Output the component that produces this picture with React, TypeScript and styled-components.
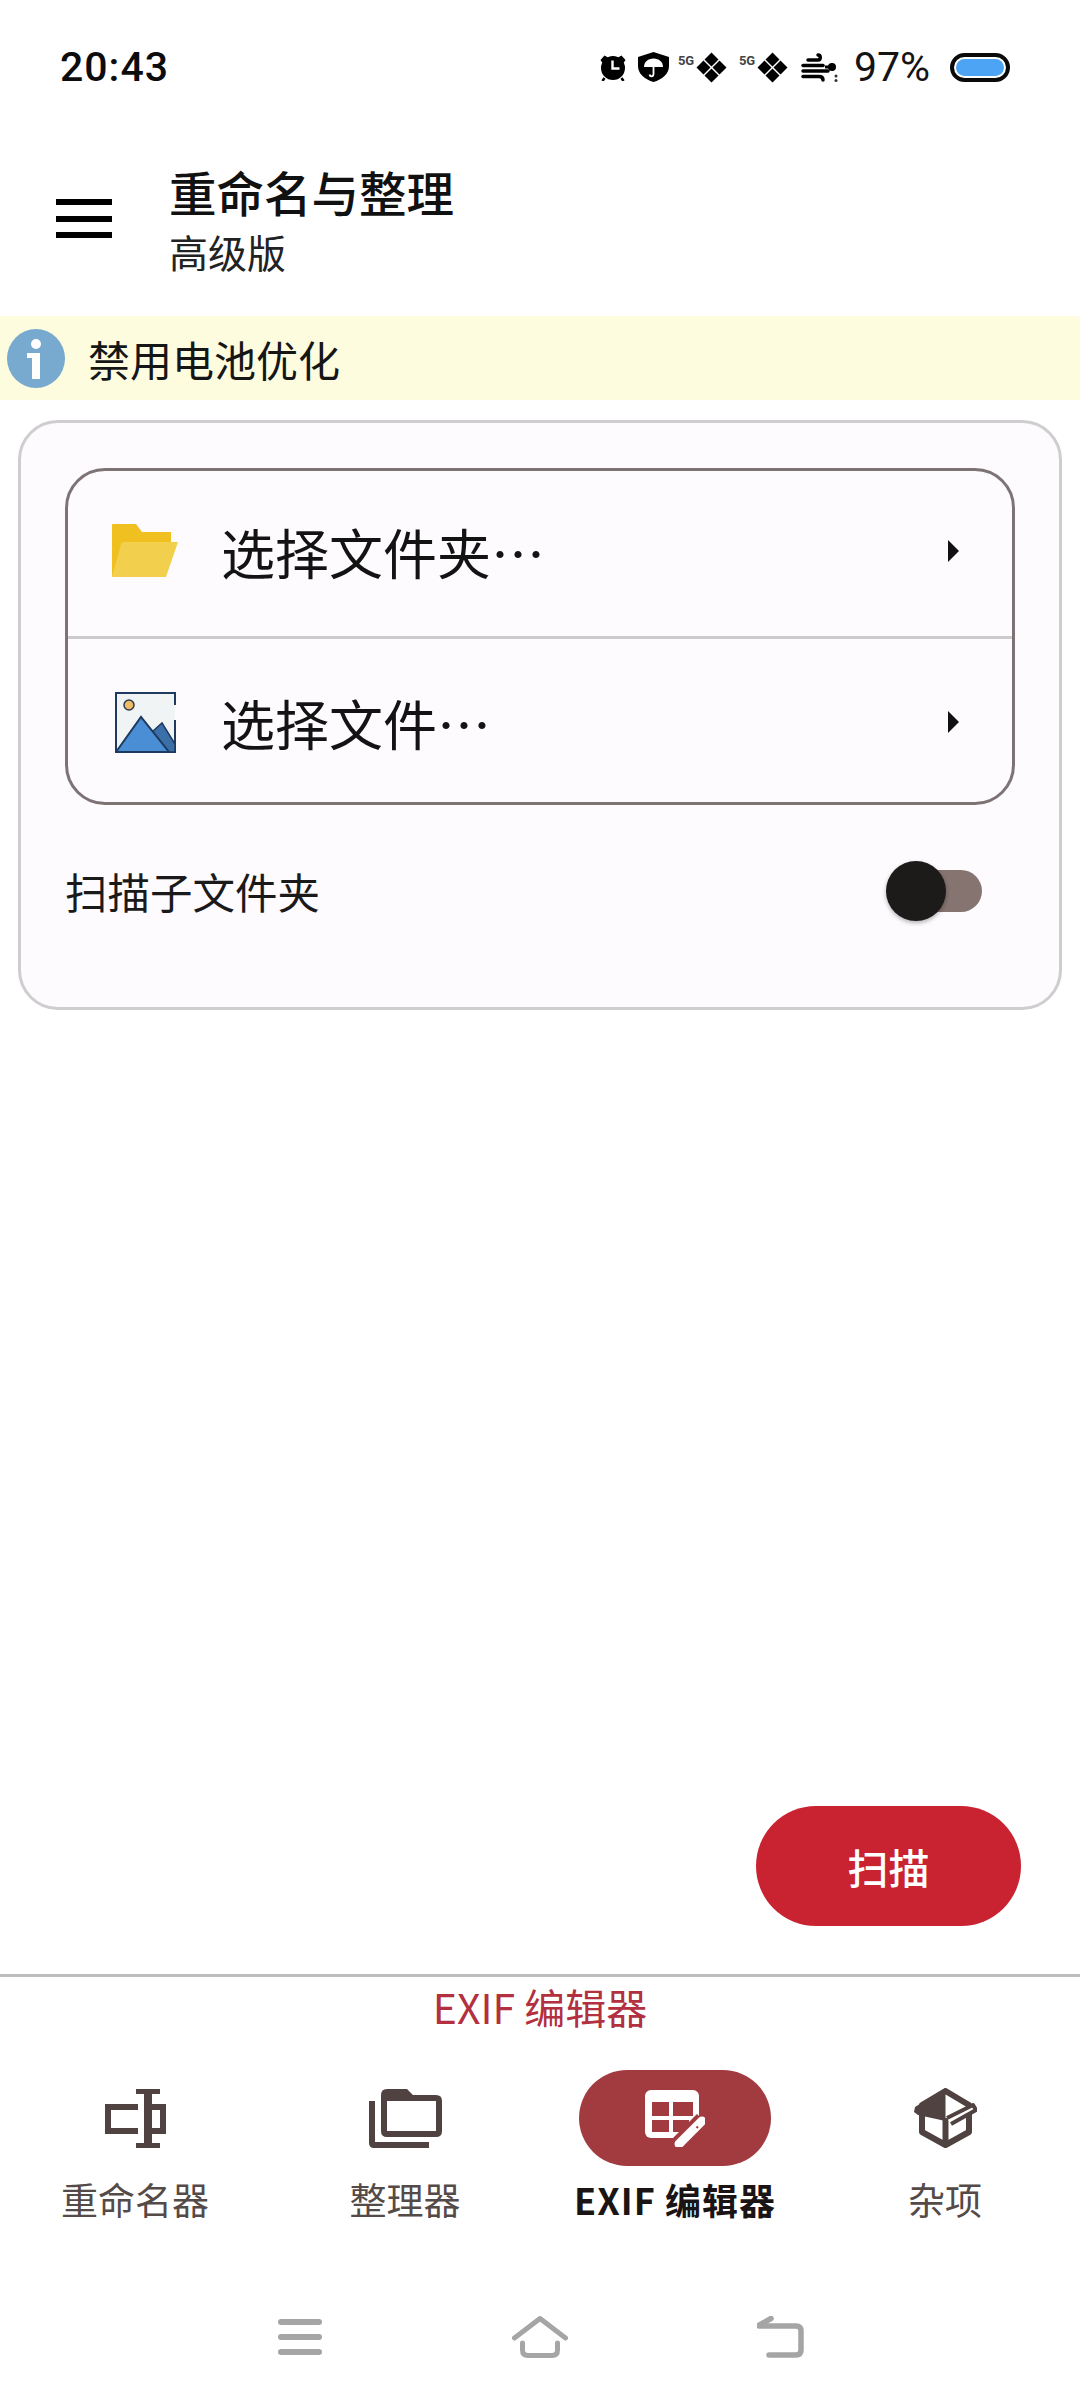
import React from "react";
import styled, { createGlobalStyle } from "styled-components";

const cjk = `"Noto Sans CJK SC", "Noto Sans", sans-serif`;

const GlobalStyle = createGlobalStyle`
  html, body { margin: 0; padding: 0; background: #fff; }
  * { box-sizing: border-box; }
`;

const Screen = styled.div`
  width: 1080px;
  height: 2400px;
  display: flex;
  flex-direction: column;
  background: #fff;
  font-family: ${cjk};
  overflow: hidden;
`;

const StatusBar = styled.div`
  height: 134px;
  flex: none;
  display: flex;
  align-items: center;
  justify-content: space-between;
  padding: 0 70px 0 60px;
`;

const Clock = styled.span`
  font-family: Roboto, sans-serif;
  font-weight: 500;
  font-size: 41px;
  letter-spacing: 1px;
  color: #0c0c0c;
`;

const StatusIcons = styled.div`
  display: flex;
  align-items: center;
`;

const StatusSlot = styled.div<{ $left: number }>`
  display: flex;
  align-items: flex-start;
  margin-left: ${(p) => p.$left}px;
`;

const FiveG = styled.span`
  font-family: Roboto, sans-serif;
  font-size: 13px;
  font-weight: 700;
  line-height: 13px;
  width: 18px;
  margin-top: 2px;
  color: #444;
`;

const Percent = styled.span`
  font-family: Roboto, sans-serif;
  font-size: 41px;
  line-height: 40px;
  color: #141414;
`;

const AppBar = styled.header`
  height: 182px;
  flex: none;
  display: flex;
  align-items: center;
  padding: 0 0 11px 56px;
`;

const Burger = styled.div`
  width: 56px;
  height: 39px;
  margin: 0 57px 2px 0;
  display: flex;
  flex-direction: column;
  justify-content: space-between;
  span {
    display: block;
    height: 6px;
    background: #000;
  }
`;

const TitleBlock = styled.div`
  display: flex;
  flex-direction: column;
`;

const Title = styled.div`
  font-size: 47.5px;
  line-height: 58px;
  margin-bottom: 5px;
  font-weight: 500;
  color: #111;
`;

const Subtitle = styled.div`
  font-size: 39px;
  line-height: 50px;
  color: #222;
`;

const Banner = styled.div`
  height: 84px;
  flex: none;
  display: flex;
  align-items: center;
  padding-left: 7px;
  background: #fefcdf;
`;

const BannerText = styled.span`
  margin-left: 23px;
  font-size: 42px;
  color: #161616;
`;

const Main = styled.main`
  flex: 1;
  display: flex;
  flex-direction: column;
  padding: 20px 18px 48px;
`;

const Card = styled.section`
  height: 590px;
  padding: 45px 44px 0 44px;
  border: 3px solid #cfcdcf;
  border-radius: 40px;
  background: #fdfbfe;
`;

const PickerGroup = styled.div`
  height: 337px;
  border: 3px solid #7d7375;
  border-radius: 40px;
  display: flex;
  flex-direction: column;
`;

const PickerRow = styled.div<{ $divided?: boolean }>`
  flex: 1;
  display: flex;
  align-items: center;
  padding: ${(p) => (p.$divided ? "3px 53px 0 44px" : "0 53px 5px 44px")};
  border-top: ${(p) => (p.$divided ? "3px solid #cccacb" : "none")};
`;

const PickerIcon = styled.div`
  width: 66px;
  display: flex;
  justify-content: center;
  flex: none;
`;

const PickerLabel = styled.span`
  flex: 1;
  margin-left: 43px;
  font-size: 54px;
  color: #131313;
`;

const Caret = styled.div`
  width: 0;
  height: 0;
  border-top: 11px solid transparent;
  border-bottom: 11px solid transparent;
  border-left: 11px solid #111;
`;

const ToggleRow = styled.div`
  display: flex;
  align-items: center;
  justify-content: space-between;
  margin-top: 56px;
  padding-right: 33px;
`;

const ToggleLabel = styled.span`
  font-size: 42.5px;
  line-height: 60px;
  color: #1a1a1a;
`;

const Track = styled.div`
  position: relative;
  width: 81px;
  height: 42px;
  border-radius: 21px;
  background: #85746f;
`;

const Thumb = styled.div`
  position: absolute;
  left: -15px;
  top: -9px;
  width: 60px;
  height: 60px;
  border-radius: 50%;
  background: #1d1a1a;
  box-shadow: 0 2px 4px rgba(0, 0, 0, 0.3);
`;

const ScanButton = styled.button`
  align-self: flex-end;
  margin: auto 41px 0 0;
  width: 265px;
  height: 120px;
  border: none;
  border-radius: 60px;
  background: #c92230;
  color: #fff;
  font-family: ${cjk};
  font-size: 41px;
  font-weight: 500;
`;

const BottomArea = styled.footer`
  flex: none;
  border-top: 3px solid #bdbdbd;
`;

const Caption = styled.div`
  height: 58px;
  display: flex;
  align-items: center;
  justify-content: center;
  font-size: 41px;
  color: #b23040;
`;

const TabBar = styled.nav`
  margin-top: 35px;
  display: grid;
  grid-template-columns: repeat(4, 270px);
`;

const Tab = styled.div`
  display: flex;
  flex-direction: column;
  align-items: center;
`;

const TabIcon = styled.div<{ $active?: boolean }>`
  width: 192px;
  height: 96px;
  border-radius: 48px;
  display: flex;
  align-items: center;
  justify-content: center;
  background: ${(p) => (p.$active ? "#a13b40" : "transparent")};
`;

const TabLabel = styled.span<{ $active?: boolean }>`
  margin-top: 13px;
  font-size: ${(p) => (p.$active ? 36 : 37)}px;
  line-height: 40px;
  white-space: nowrap;
  letter-spacing: ${(p) => (p.$active ? "1px" : "0")};
  font-weight: ${(p) => (p.$active ? 700 : 400)};
  color: ${(p) => (p.$active ? "#1a1414" : "#544a48")};
`;

const SystemNav = styled.div`
  height: 181px;
  padding-top: 97px;
  display: grid;
  grid-template-columns: repeat(3, 240px);
  justify-content: center;
  justify-items: center;
  align-items: start;
`;

const AlarmIcon = () => (
  <svg width="28" height="28" viewBox="0 0 27 28">
    <circle cx="13.5" cy="15" r="12" fill="#000" />
    <path d="M1 7 5 2.5 8.5 4.5 3 10zM26 7 22 2.5 18.500 4.500 24 10z" fill="#000" />
    <path d="M5 25 3 28M22 25l2 3" stroke="#000" strokeWidth="2.500" />
    <path d="M13 7.500V15.500H20" fill="none" stroke="#fff" strokeWidth="2.400" />
  </svg>
);

const ShieldIcon = () => (
  <svg width="31" height="30" viewBox="0 0 31 30">
    <path d="M15.500 0 31 5V14C31 22 24 27.500 15.500 30 7 27.500 0 22 0 14V5Z" fill="#000" />
    <path d="M6 15C6 10 10 6.500 15.500 6.500S25 10 25 15Z" fill="#fff" />
    <path d="M15.500 15V22C15.500 25 12 25 11.500 22.500" fill="none" stroke="#fff" strokeWidth="1.800" />
  </svg>
);

const DiamondsIcon = () => (
  <svg width="31" height="31" viewBox="0 0 31 31">
    <path d="M15.500 .5 22.500 7.500 15.500 14.500 8.500 7.500ZM7.500 8.500 14.500 15.500 7.500 22.500 .5 15.500ZM23.500 8.500 30.500 15.500 23.500 22.500 16.500 15.500ZM15.500 16.500 22.500 23.500 15.500 30.500 8.500 23.500Z" fill="#000" />
  </svg>
);

const WindIcon = () => (
  <svg width="37" height="29" viewBox="0 0 37 29">
    <g fill="none" stroke="#000" strokeWidth="3.500" strokeLinecap="round">
      <path d="M7 7H17C20 7 20 2 17 2" />
      <path d="M2 12.500H22" />
      <path d="M2 18H27" />
      <path d="M2 23.500H18C21 23.500 22 25 22 27" />
    </g>
    <circle cx="31" cy="14" r="4" fill="#000" />
    <path d="M24 14H28" stroke="#000" strokeWidth="3" />
    <circle cx="35" cy="23" r="1.500" fill="#333" />
    <circle cx="35" cy="27.500" r="1.500" fill="#333" />
  </svg>
);

const BatteryIcon = () => (
  <svg width="60" height="29" viewBox="0 0 60 29">
    <rect x="2" y="2" width="56" height="25" rx="12.500" fill="#fff" stroke="#0a0a0a" strokeWidth="4" />
    <rect x="6" y="6" width="48" height="17" rx="8.500" fill="#4ea4f4" />
  </svg>
);

const InfoIcon = () => (
  <svg width="58" height="59" viewBox="0 0 58 59">
    <ellipse cx="29" cy="29.500" rx="29" ry="29.500" fill="#78a9cf" />
    <circle cx="29" cy="15" r="5" fill="#fff" />
    <path d="M20 24H33V50H25V29H20Z" fill="#fff" />
  </svg>
);

const FolderIcon = () => (
  <svg width="66" height="54" viewBox="0 0 66 54">
    <path d="M0 1Q0 0 1 0H24L30 8H59V25H14L0 53Z" fill="#efc01f" />
    <path d="M0 53 9 20Q10 18 12 18H66L54 53Z" fill="#f2d04d" />
  </svg>
);

const PictureIcon = () => (
  <svg width="61" height="61" viewBox="0 0 61 61">
    <rect x="1" y="1" width="59" height="59" fill="#f0f4f4" />
    <path d="M60 13V1H1V60H60V28" fill="none" stroke="#1f3a5f" strokeWidth="2" />
    <circle cx="14" cy="13" r="5" fill="#eebb66" stroke="#2b3a50" strokeWidth="1.500" />
    <path d="M37 40 47 31 60 52V60H50Z" fill="#3b6fa8" stroke="#1f3a5f" strokeWidth="1.500" />
    <path d="M1 60 26 25 54 60Z" fill="#4a8fd6" stroke="#1f3a5f" strokeWidth="2" />
  </svg>
);

const RenameIcon = () => (
  <svg width="61" height="59" viewBox="0 0 61 59" fill="#4f4240">
    <path d="M33 18H3V42H33M45 18H58V42H45" fill="none" stroke="#4f4240" strokeWidth="6" />
    <path d="M31 0H55V5H47V54H55V59H31V54H39V5H31Z" />
  </svg>
);

const FoldersIcon = () => (
  <svg width="73" height="59" viewBox="0 0 73 59" fill="#4f4240">
    <path d="M0 12H6V53H60V59H5Q0 59 0 54Z" />
    <path
      fillRule="evenodd"
      d="M18 0H38L44 6H67Q73 6 73 12V42Q73 48 67 48H18Q12 48 12 42V6Q12 0 18 0ZM18 12V42H67V12Z"
    />
  </svg>
);

const TableEditIcon = () => (
  <svg width="60" height="57" viewBox="0 0 60 57">
    <rect width="54" height="48" rx="6" fill="#fff" />
    <path d="M7 12H24V26H7ZM28 12H48V26H28ZM7 30H24V42H7ZM28 30H44V42H28Z" fill="#a13b40" />
    <path d="M33 55 58 30" stroke="#a13b40" strokeWidth="17" />
    <path d="M34 54 57 31" stroke="#fff" strokeWidth="9" strokeLinecap="round" />
    <path d="M51.500 36.500 53 38" stroke="#a13b40" strokeWidth="2" />
  </svg>
);

const BoxIcon = () => (
  <svg width="63" height="60" viewBox="0 0 63 60">
    <path d="M31.500 3 8 17V44L31.500 57 55 44V17Z" fill="#fff" stroke="#4f4240" strokeWidth="6" strokeLinejoin="round" />
    <path d="M31.500 0 1 19 0 24 4 27 31.500 33Z" fill="#4f4240" />
    <path d="M31.500 30V57" stroke="#4f4240" strokeWidth="6" />
    <path d="M33 30 59 17 62 22 37 36" fill="#fff" stroke="#4f4240" strokeWidth="4" strokeLinejoin="round" />
  </svg>
);

const NavMenuIcon = () => (
  <svg width="44" height="42" viewBox="0 0 44 42" fill="#a5a5a5">
    <rect y="3" width="44" height="6" rx="3" />
    <rect y="18" width="44" height="6" rx="3" />
    <rect y="33" width="44" height="6" rx="3" />
  </svg>
);

const NavHomeIcon = () => (
  <svg width="56" height="42" viewBox="0 0 56 42" fill="none" stroke="#a5a5a5" strokeWidth="5" strokeLinecap="round" strokeLinejoin="round">
    <path d="M2.500 22 28 2.500 53.500 22" />
    <path d="M10.500 27V34Q10.500 39.500 16 39.500H40Q45.500 39.500 45.500 34V27" />
  </svg>
);

const NavBackIcon = () => (
  <svg width="47" height="42" viewBox="0 0 47 42" fill="none" stroke="#a5a5a5" strokeWidth="5.500" strokeLinecap="round" strokeLinejoin="round">
    <path d="M2 10H39Q44 10 44 15V34Q44 39 39 39H12" />
    <path d="M2.500 9 14 2.500" />
  </svg>
);

const tabs = [
  { label: "重命名器", icon: <RenameIcon /> },
  { label: "整理器", icon: <FoldersIcon /> },
  { label: "EXIF 编辑器", icon: <TableEditIcon />, active: true },
  { label: "杂项", icon: <BoxIcon /> },
];

const App: React.FC = () => (
  <Screen>
    <GlobalStyle />
    <StatusBar>
      <Clock>20:43</Clock>
      <StatusIcons>
        <StatusSlot $left={0}>
          <AlarmIcon />
        </StatusSlot>
        <StatusSlot $left={11}>
          <ShieldIcon />
        </StatusSlot>
        <StatusSlot $left={9}>
          <FiveG>5G</FiveG>
          <DiamondsIcon />
        </StatusSlot>
        <StatusSlot $left={12}>
          <FiveG>5G</FiveG>
          <DiamondsIcon />
        </StatusSlot>
        <StatusSlot $left={13}>
          <WindIcon />
        </StatusSlot>
        <StatusSlot $left={16}>
          <Percent>97%</Percent>
        </StatusSlot>
        <StatusSlot $left={20}>
          <BatteryIcon />
        </StatusSlot>
      </StatusIcons>
    </StatusBar>

    <AppBar>
      <Burger>
        <span />
        <span />
        <span />
      </Burger>
      <TitleBlock>
        <Title>重命名与整理</Title>
        <Subtitle>高级版</Subtitle>
      </TitleBlock>
    </AppBar>

    <Banner>
      <InfoIcon />
      <BannerText>禁用电池优化</BannerText>
    </Banner>

    <Main>
      <Card>
        <PickerGroup>
          <PickerRow>
            <PickerIcon>
              <FolderIcon />
            </PickerIcon>
            <PickerLabel>选择文件夹…</PickerLabel>
            <Caret />
          </PickerRow>
          <PickerRow $divided>
            <PickerIcon>
              <PictureIcon />
            </PickerIcon>
            <PickerLabel>选择文件…</PickerLabel>
            <Caret />
          </PickerRow>
        </PickerGroup>
        <ToggleRow>
          <ToggleLabel>扫描子文件夹</ToggleLabel>
          <Track>
            <Thumb />
          </Track>
        </ToggleRow>
      </Card>
      <ScanButton>扫描</ScanButton>
    </Main>

    <BottomArea>
      <Caption>EXIF 编辑器</Caption>
      <TabBar>
        {tabs.map((tab) => (
          <Tab key={tab.label}>
            <TabIcon $active={tab.active}>{tab.icon}</TabIcon>
            <TabLabel $active={tab.active}>{tab.label}</TabLabel>
          </Tab>
        ))}
      </TabBar>
      <SystemNav>
        <NavMenuIcon />
        <NavHomeIcon />
        <NavBackIcon />
      </SystemNav>
    </BottomArea>
  </Screen>
);

export default App;
